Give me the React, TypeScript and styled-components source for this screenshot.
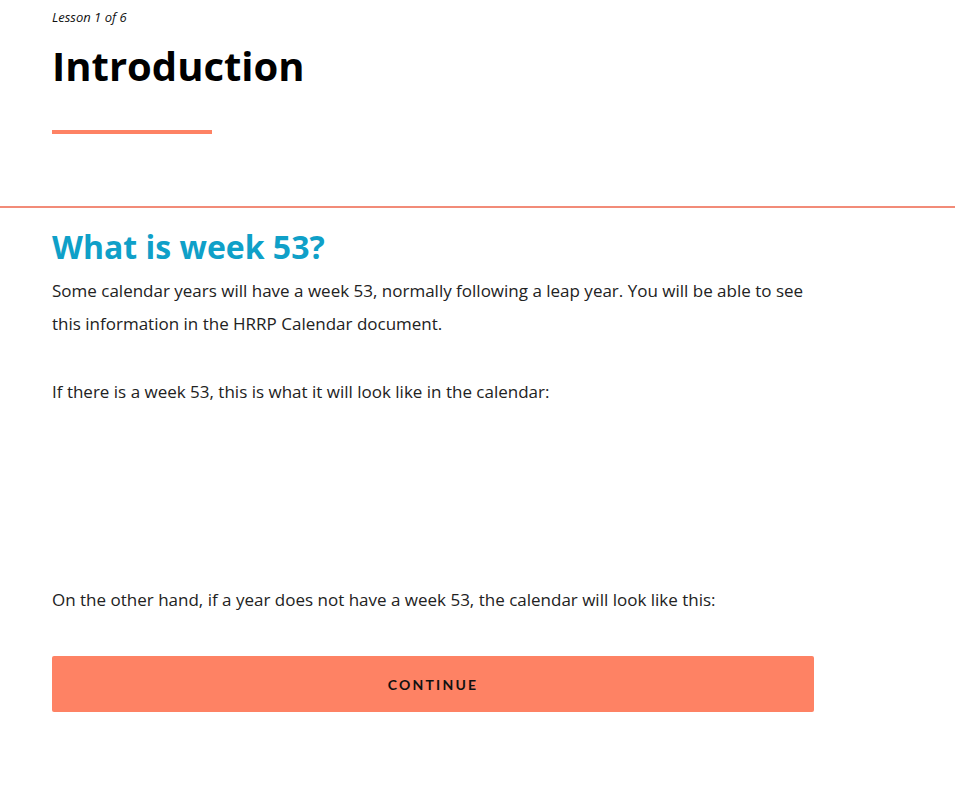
import React from 'react';
import styled, { createGlobalStyle } from 'styled-components';

const GlobalStyle = createGlobalStyle`
  html, body {
    margin: 0;
    padding: 0;
    background: #fff;
  }
  body {
    font-family: 'Open Sans', 'Liberation Sans', sans-serif;
    color: #222;
  }
`;

const Header = styled.header`
  padding: 0 52px;
  border-bottom: 2px solid #f28b78;
`;

const Crumb = styled.div`
  font-size: 13px;
  font-style: italic;
  line-height: 16px;
  padding-top: 9px;
  color: #111;
`;

const Title = styled.h1`
  margin: 15px 0 0;
  font-size: 40px;
  font-weight: 700;
  line-height: 52px;
  color: #000;
`;

const Accent = styled.div`
  width: 160px;
  height: 4px;
  background: #fe8264;
  margin-top: 38px;
  margin-bottom: 72px;
`;

const Body = styled.main`
  padding: 18px 52px 0;
  max-width: 762px;
`;

const Heading = styled.h2`
  margin: 0;
  font-size: 32px;
  font-weight: 700;
  line-height: 42px;
  color: #0fa0c8;
`;

const Para = styled.p<{ $gap?: number }>`
  margin: ${(p) => p.$gap ?? 0}px 0 0;
  font-size: 17px;
  line-height: 33px;
  color: #222;
`;

const Figure = styled.div`
  height: 175px;
`;

const Button = styled.button`
  display: block;
  width: 100%;
  height: 56px;
  margin-top: 40px;
  border: none;
  border-radius: 2px;
  background: #fe8264;
  color: #111;
  font-family: Lato, 'Liberation Sans', sans-serif;
  font-weight: 700;
  font-size: 14px;
  letter-spacing: 2.2px;
  text-transform: uppercase;
  cursor: pointer;
`;

export default function App() {
  return (
    <>
      <GlobalStyle />
      <Header>
        <Crumb>Lesson 1 of 6</Crumb>
        <Title>Introduction</Title>
        <Accent />
      </Header>
      <Body>
        <Heading>What is week 53?</Heading>
        <Para $gap={6}>
          Some calendar years will have a week 53, normally following a leap year. You will be able to see
          this information in the HRRP Calendar document.
        </Para>
        <Para $gap={35}>If there is a week 53, this is what it will look like in the calendar:</Para>
        <Figure />
        <Para>On the other hand, if a year does not have a week 53, the calendar will look like this:</Para>
        <Button>Continue</Button>
      </Body>
    </>
  );
}
